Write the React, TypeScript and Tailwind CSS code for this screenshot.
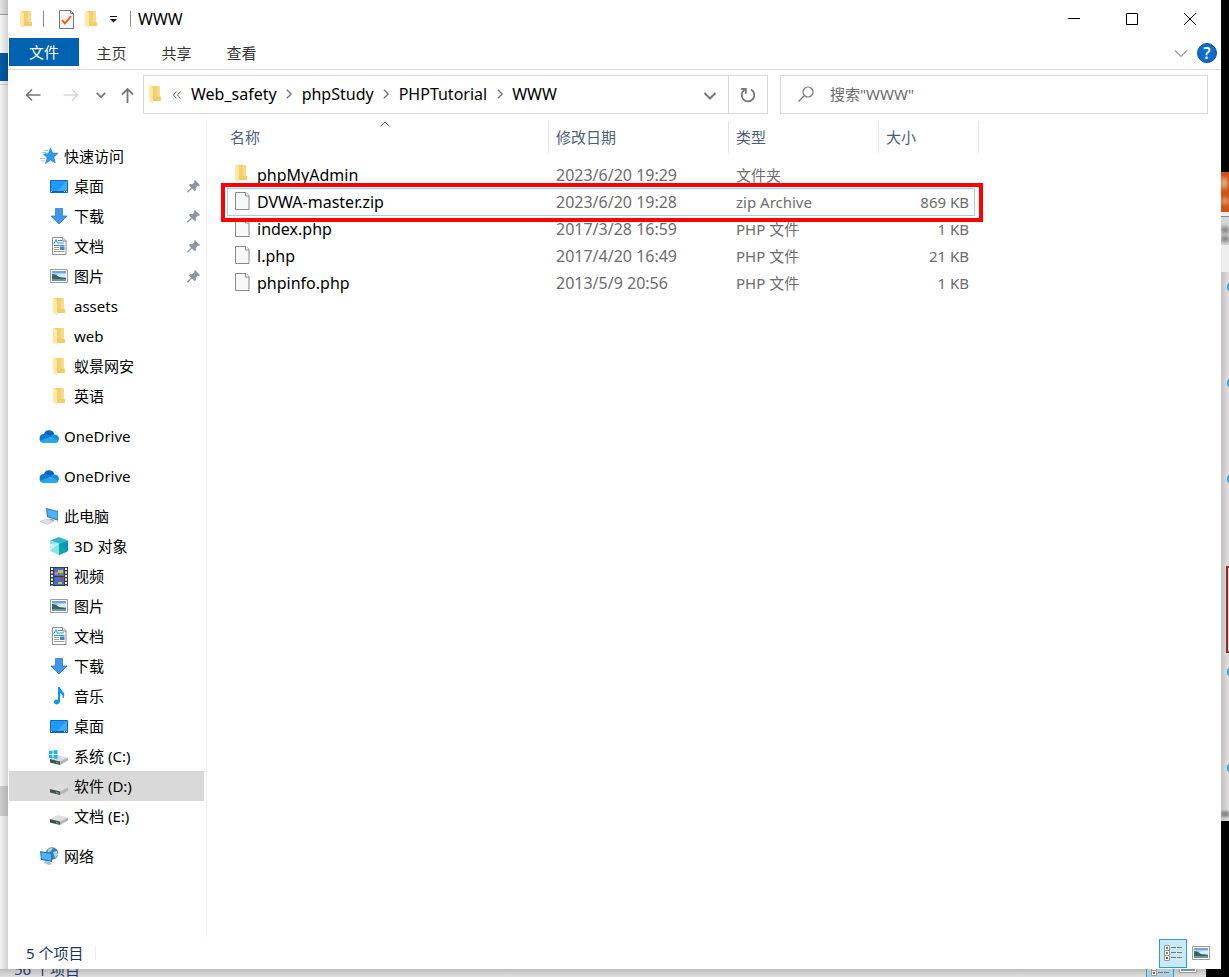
import type { ReactNode } from "react";

type IconName =
  | "star"
  | "desktop"
  | "download"
  | "document"
  | "picture"
  | "folder"
  | "cloud"
  | "computer"
  | "cube"
  | "video"
  | "music"
  | "systemDrive"
  | "drive"
  | "network";

interface NavItem {
  label: string;
  icon: IconName;
  root?: boolean;
  pinned?: boolean;
  active?: boolean;
}

interface FileRow {
  name: string;
  date: string;
  type: string;
  size: string;
  folder?: boolean;
  selected?: boolean;
}

const NAV_GROUPS: NavItem[][] = [
  [
    { label: "快速访问", icon: "star", root: true },
    { label: "桌面", icon: "desktop", pinned: true },
    { label: "下载", icon: "download", pinned: true },
    { label: "文档", icon: "document", pinned: true },
    { label: "图片", icon: "picture", pinned: true },
    { label: "assets", icon: "folder" },
    { label: "web", icon: "folder" },
    { label: "蚁景网安", icon: "folder" },
    { label: "英语", icon: "folder" },
  ],
  [{ label: "OneDrive", icon: "cloud", root: true }],
  [{ label: "OneDrive", icon: "cloud", root: true }],
  [
    { label: "此电脑", icon: "computer", root: true },
    { label: "3D 对象", icon: "cube" },
    { label: "视频", icon: "video" },
    { label: "图片", icon: "picture" },
    { label: "文档", icon: "document" },
    { label: "下载", icon: "download" },
    { label: "音乐", icon: "music" },
    { label: "桌面", icon: "desktop" },
    { label: "系统 (C:)", icon: "systemDrive" },
    { label: "软件 (D:)", icon: "drive", active: true },
    { label: "文档 (E:)", icon: "drive" },
  ],
  [{ label: "网络", icon: "network", root: true }],
];

const FILES: FileRow[] = [
  { name: "phpMyAdmin", date: "2023/6/20 19:29", type: "文件夹", size: "", folder: true },
  { name: "DVWA-master.zip", date: "2023/6/20 19:28", type: "zip Archive", size: "869 KB", selected: true },
  { name: "index.php", date: "2017/3/28 16:59", type: "PHP 文件", size: "1 KB" },
  { name: "l.php", date: "2017/4/20 16:49", type: "PHP 文件", size: "21 KB" },
  { name: "phpinfo.php", date: "2013/5/9 20:56", type: "PHP 文件", size: "1 KB" },
];

const CRUMBS = ["Web_safety", "phpStudy", "PHPTutorial", "WWW"];

function FolderIcon() {
  return (
    <svg width="12" height="17" viewBox="0 0 12 17" className="shrink-0">
      <path d="M1 0h10v11h1v4H3V2z" fill="#f5d06f" />
      <path d="M8 0h3v11H8z" fill="#f8dc8a" />
      <path d="M0 0l4 2v15l-4-2z" fill="#ffe9a6" />
      <path d="M4 11h8v4H4z" fill="#f3cb69" />
    </svg>
  );
}

function FileIcon() {
  return (
    <svg width="15" height="18" viewBox="0 0 15 18" className="shrink-0">
      <path d="M.5.5h10.500l3 3v14H.5z" fill="#f7f8f9" stroke="#8a8a8a" />
      <path d="M10.500.5v3.500h3.500" fill="#fff" stroke="#8a8a8a" />
    </svg>
  );
}

function PictureIcon() {
  return (
    <svg width="18" height="14" viewBox="0 0 18 14" className="shrink-0">
      <path d="M.5.5h17v13H.5z" fill="#fff" stroke="#9b9b9b" />
      <path d="M2 2h14v10H2z" fill="#a9cff2" />
      <path d="M2 2h14v2H2z" fill="#6ea4e6" />
      <path d="M7 6q4-2 9-1v3H7z" fill="#dcecf8" />
      <path d="M2 5q4 0 7 3l7 1v1H2z" fill="#3b6557" />
      <path d="M2 10h14v2H2z" fill="#6b93b2" />
    </svg>
  );
}

function PinIcon() {
  return (
    <svg width="13" height="13" viewBox="0 0 13 13" className="shrink-0">
      <path d="M8 0l5 5-1 1-1-.4L8.700 8l.3 2-1.200 1.200L5 8.500 1 12.500H0v-1L4.200 7.700 1.800 5.200 3 4l2.200.3L7.600 2 7 1z" fill="#8b969f" />
    </svg>
  );
}

function Chevron({ size, color, d, stroke }: { size: number; color: string; d: string; stroke: number }) {
  return (
    <svg width={size} height={size} viewBox="0 0 14 14" fill="none" stroke={color} strokeWidth={stroke}>
      <path d={d} />
    </svg>
  );
}

function DriveShape() {
  return (
    <>
      <path d="M0 12l8-4 10 2.500-8 4z" fill="#dedede" />
      <path d="M10 14.500l8-4v3L10 18z" fill="#b4b4b4" />
      <path d="M0 12l10 2.500V18L0 15.500z" fill="#4b4b4b" />
      <path d="M6 14.800l2.500.7v1.200L6 16z" fill="#39d353" />
    </>
  );
}

function NavIcon({ name }: { name: IconName }) {
  switch (name) {
    case "folder":
      return <FolderIcon />;
    case "picture":
      return <PictureIcon />;
    case "star":
      return (
        <svg width="18" height="16" viewBox="0 0 18 16">
          <path d="M10.500 0l2 5 5.500.3-4.300 3.600 1.500 6.100-4.700-3L5.500 15.500l1.700-5.700L3.500 6l5-.3z" fill="#2a9df0" stroke="#1878c4" strokeWidth=".7" />
          <path d="M4 2.500h4M1.500 4.500H6M0 10.500h5M1 13h3.500" stroke="#8ccaf3" />
        </svg>
      );
    case "desktop":
      return (
        <svg width="18" height="13" viewBox="0 0 18 13">
          <path d="M.5.5h17v12H.5z" fill="#1e9bfd" stroke="#0a6bb8" />
          <path d="M17 1v9L7 11z" fill="#41adff" />
          <path d="M1 11.500h16" stroke="#0b67ae" />
          <path d="M1 11.500h1M14 11.500h1M16 11.500h1" stroke="#fff" />
        </svg>
      );
    case "download":
      return (
        <svg width="18" height="17" viewBox="0 0 18 17">
          <path d="M5.500.5h7v7.500h4.500L9 16 1 8h4.500z" fill="#3b98ea" stroke="#2b7ccb" strokeWidth=".8" />
        </svg>
      );
    case "document":
      return (
        <svg width="18" height="18" viewBox="0 0 18 18">
          <path d="M2.500.5H13l3 3v14H2.500z" fill="#fff" stroke="#8d8d8d" />
          <path d="M12.500.5V4H16" fill="#eee" stroke="#8d8d8d" />
          <path d="M4 6.500L6 2.500l1.500 4M8 3.500h4M8 6h6M4 8.500h10.500" fill="none" stroke="#2693dc" />
          <path d="M4 10.500h5M4 12.500h5M4 14.500h10.500" stroke="#9a9a9a" />
          <path d="M10 9.500h4.500v3.500H10z" fill="#3f86b8" />
        </svg>
      );
    case "cloud":
      return (
        <svg width="20" height="13" viewBox="0 0 20 13" className="shrink-0">
          <path d="M5 3.500A5.500 5.500 0 0 1 15.300 4L12 7z" fill="#0364b8" />
          <path d="M4 12.500A4.300 4.300 0 0 1 4.500 4q3-1 5.500 1.200l3 2L6 12.500z" fill="#0f78d4" />
          <path d="M11 6q2-2.300 5-1.600 3.800.8 4 4.200 0 2-1.500 3.200z" fill="#1490df" />
          <path d="M1 11q1.200 2 3.500 2H16q2 0 3.300-1.600L12 6.500z" fill="#28a8ea" />
        </svg>
      );
    case "computer":
      return (
        <svg width="18" height="17" viewBox="0 0 18 17">
          <path d="M6 0l12.500 3v10L7 9z" fill="#2878b8" />
          <path d="M7.200 1.300L17.500 3.800v7.700L8 8.300z" fill="#4fb2f7" />
          <path d="M10 10.500l4 1.300v1.500l-5-1.500z" fill="#9aa4ad" />
          <path d="M0 13.500l7-2.500 6.500 2.500-6 3z" fill="#dfe3e7" stroke="#b0b7bd" strokeWidth=".5" />
        </svg>
      );
    case "cube":
      return (
        <svg width="18" height="18" viewBox="0 0 18 18">
          <path d="M9 0l9 3.500L9 6.500 0 3.500z" fill="#2fb9c5" />
          <path d="M0 3.500l9 3V18L0 14z" fill="#8be0e8" />
          <path d="M0 14V7l9-.5z" fill="#c4f3f5" />
          <path d="M18 3.500l-9 3V18l9-4z" fill="#0397c6" />
          <path d="M9 18V6.500L18 14z" fill="#08a9a9" />
        </svg>
      );
    case "video":
      return (
        <svg width="18" height="19" viewBox="0 0 18 19">
          <path d="M0 0h18v19H0z" fill="#3c3c3c" />
          <path d="M2 1v18M16 1v18" stroke="#f4f4f4" strokeWidth="2" strokeDasharray="2 1.500" />
          <path d="M4 1h10v8H4zM4 10h10v8H4z" fill="#3d70ce" />
          <path d="M8 3h5v3H8zM8 15h4v2H8z" fill="#e8bd32" />
          <path d="M5 5h3v3H5z" fill="#d86fc4" />
          <path d="M10 10h3v3h-2z" fill="#d5342a" />
          <path d="M9 6h4v2H9z" fill="#45a745" />
        </svg>
      );
    case "music":
      return (
        <svg width="18" height="18" viewBox="0 0 18 18">
          <path d="M8 0h2q.3 2.500 2.500 4.300Q15.500 7 13.500 11h-1q.8-3.500-2.500-4.800v8Q9.800 17 6.500 17.400 3.500 17 3.800 14.800 4.800 12 8 12.700z" fill="#0f97f0" />
        </svg>
      );
    case "systemDrive":
      return (
        <svg width="18" height="18" viewBox="0 1 18 18" className="overflow-visible">
          <g transform="translate(0 1)">
            <DriveShape />
          </g>
          <path d="M-1 5l3.500-.5V8H-1zM3.500 4.400l4-.5V8h-4zM-1 9h3.500v3.500L-1 12zM3.500 9h4v4.100l-4-.5z" fill="#14b5ee" />
        </svg>
      );
    case "drive":
      return (
        <svg width="18" height="18" viewBox="0 0 18 18">
          <DriveShape />
        </svg>
      );
    case "network":
      return (
        <svg width="18" height="18" viewBox="0 0 18 18" className="overflow-visible">
          <circle cx="12" cy="6.500" r="6.200" fill="#3f7fa8" />
          <path d="M7.500 3q2.500-2.500 5.500-2.300L11 4 8 6zM13 5l4-1 1 4-3 3z" fill="#a9d3e6" />
          <path d="M0 4l12 2v9L1 13z" fill="#1f78be" />
          <path d="M1 5.300l10 1.600v6.700L1.800 12z" fill="#4db2fa" />
          <path d="M5 14l5 1 2 2-3 1-5-2z" fill="#aebac3" />
        </svg>
      );
  }
}

function NavEntry({ item }: { item: NavItem }) {
  return (
    <li>
      <a
        href="#"
        className={`ml-px mr-[2px] flex h-[30px] items-center gap-1.5 pr-1 ${item.root ? "pl-[31px]" : "pl-[41px]"} ${
          item.active ? "bg-[#d9d9d9]" : ""
        }`}
      >
        <span className="flex w-[18px] shrink-0 items-center justify-center">
          <NavIcon name={item.icon} />
        </span>
        <span className="flex-1 whitespace-nowrap">{item.label}</span>
        {item.pinned && <PinIcon />}
      </a>
    </li>
  );
}

function TitleBar() {
  return (
    <header className="flex h-[38px] items-center pl-3 pr-[2px]">
      <FolderIcon />
      <span className="ml-[11px] h-4 w-px bg-[#8a8a8a]" />
      <button type="button" aria-label="属性" className="ml-[15px]">
        <svg width="15" height="19" viewBox="0 0 15 19">
          <path d="M.5.5h11l3 3v15H.5z" fill="#f6f7f8" stroke="#777" />
          <path d="M11.500.5v3h3" fill="none" stroke="#777" />
          <path d="M3 10l3 3.500L12 6" fill="none" stroke="#f0641e" strokeWidth="2" />
        </svg>
      </button>
      <button type="button" aria-label="新建文件夹" className="ml-[11px]">
        <FolderIcon />
      </button>
      <button type="button" aria-label="自定义快速访问工具栏" className="ml-[13px]">
        <svg width="7" height="7" viewBox="0 0 7 7">
          <path d="M0 0h7v1H0zM0 3h7L3.500 6.500z" fill="#111" />
        </svg>
      </button>
      <span className="ml-[13px] h-4 w-px bg-[#8a8a8a]" />
      <h1 className="ml-[7px] flex-1 text-base leading-5">WWW</h1>
      <WindowButton label="最小化">
        <path d="M0 5.500h12" />
      </WindowButton>
      <WindowButton label="最大化">
        <path d="M.5.5h11v11H.5z" />
      </WindowButton>
      <WindowButton label="关闭">
        <path d="M0 0l12 12M12 0L0 12" />
      </WindowButton>
    </header>
  );
}

function WindowButton({ label, children }: { label: string; children: ReactNode }) {
  return (
    <button type="button" aria-label={label} className="flex h-[38px] w-[58px] items-center justify-center">
      <svg width="12" height="12" viewBox="0 0 12 12" fill="none" stroke="#000">
        {children}
      </svg>
    </button>
  );
}

function RibbonTabs() {
  return (
    <div className="flex h-8 items-start border-b border-[#dadada] pl-px">
      <button type="button" className="h-7 w-[70px] bg-[#0063b1] text-white">
        文件
      </button>
      {["主页", "共享", "查看"].map((tab) => (
        <button key={tab} type="button" className="h-[30px] w-[65px] text-[#333]">
          {tab}
        </button>
      ))}
      <div className="ml-auto flex h-[30px] items-center gap-[9px] pr-1">
        <button type="button" aria-label="展开功能区">
          <Chevron size={14} color="#999" stroke={1.2} d="M1 4.500l6 6 6-6" />
        </button>
        <button
          type="button"
          aria-label="帮助"
          className="h-5 w-5 rounded-full border border-[#10508c] bg-[#0a6ccc] text-base font-semibold leading-[18px] text-white"
        >
          ?
        </button>
      </div>
    </div>
  );
}

function AddressRow() {
  return (
    <div className="flex items-center py-[5px] pl-1.5 pr-[13px]">
      <button type="button" aria-label="后退" className="flex h-[39px] w-[38px] items-center justify-center">
        <svg width="16" height="14" viewBox="0 0 16 14" fill="none" stroke="#767676" strokeWidth="1.600">
          <path d="M15.500 7H1.500M7 1.500L1.500 7 7 12.500" />
        </svg>
      </button>
      <button type="button" aria-label="前进" className="flex h-[39px] w-[38px] items-center justify-center">
        <svg width="16" height="14" viewBox="0 0 16 14" fill="none" stroke="#d8d8d8" strokeWidth="1.600">
          <path d="M.5 7h14M9 1.500L14.500 7 9 12.500" />
        </svg>
      </button>
      <button type="button" aria-label="最近浏览的位置" className="flex h-[39px] w-[22px] items-center justify-center">
        <Chevron size={12} color="#767676" stroke={2} d="M2 4.500l5 5 5-5" />
      </button>
      <button type="button" aria-label="上移" className="flex h-[39px] w-[31px] items-center justify-center">
        <svg width="13" height="16" viewBox="0 0 13 16" fill="none" stroke="#767676" strokeWidth="1.800">
          <path d="M6.500 16V2M1 7.500L6.500 2 12 7.500" />
        </svg>
      </button>

      <div className="flex h-[39px] min-w-0 flex-1 items-center border border-[#d9d9d9]">
        <span className="ml-[5px] mr-3">
          <FolderIcon />
        </span>
        <svg width="8" height="8" viewBox="0 0 8 8" fill="none" stroke="#666" className="mr-[10px] shrink-0">
          <path d="M3.500.5L.5 4l3 3.500M7.500.5l-3 3.500 3 3.500" />
        </svg>
        <nav aria-label="地址" className="flex flex-1 items-center pb-0.5 text-base leading-5">
          {CRUMBS.map((crumb, i) => (
            <span key={crumb} className="flex items-center">
              {i > 0 && (
                <span className="flex w-[25px] justify-center">
                  <Chevron size={10} color="#777" stroke={2} d="M4 1l6 6-6 6" />
                </span>
              )}
              <a href="#">{crumb}</a>
            </span>
          ))}
        </nav>
        <button type="button" aria-label="以前的位置" className="flex h-full w-[37px] items-center justify-center">
          <Chevron size={14} color="#767676" stroke={2} d="M1.500 5l5.500 5.500L12.500 5" />
        </button>
        <button
          type="button"
          aria-label="刷新"
          className="flex h-full w-[39px] items-center justify-center border-l border-[#d9d9d9]"
        >
          <svg width="16" height="16" viewBox="0 0 16 16" fill="none" stroke="#767676" strokeWidth="1.800">
            <path d="M4.500 2.800A6.300 6.300 0 1 0 11 2.500M1 1.900h4.800v4.800" />
          </svg>
        </button>
      </div>

      <label className="ml-3 flex h-[39px] w-[428px] items-center border border-[#d9d9d9] pb-0.5 pl-[17px]">
        <svg width="16" height="16" viewBox="0 0 16 16" fill="none" stroke="#767676" strokeWidth="1.200" className="shrink-0">
          <circle cx="10" cy="6" r="5" />
          <path d="M6.500 9.500L.5 15.500" />
        </svg>
        <input
          type="search"
          aria-label="搜索"
          placeholder={'搜索"WWW"'}
          className="ml-4 min-w-0 flex-1 bg-transparent leading-5 outline-none placeholder:text-[#6d6d6d]"
        />
      </label>
    </div>
  );
}

function FileTable() {
  return (
    <table className="w-[758px] table-fixed border-separate border-spacing-0 text-left">
      <colgroup>
        <col className="w-[328px]" />
        <col className="w-[180px]" />
        <col className="w-[150px]" />
        <col className="w-[100px]" />
      </colgroup>
      <thead className="text-[#4c607a]">
        <tr>
          {["名称", "修改日期", "类型", "大小"].map((title, i) => (
            <th key={title} scope="col" className="p-0 pb-[9px] font-normal">
              <div
                className={`relative flex h-8 items-center border-r border-[#e5e5e5] ${i === 0 ? "pl-[9px]" : "pl-[7px]"}`}
              >
                {title}
                {i === 0 && (
                  <span className="absolute left-1/2 top-0 -translate-x-1/2">
                    <svg width="11" height="6" viewBox="0 0 11 6" fill="none" stroke="#666" className="block">
                      <path d="M1 5.500L5.500 1 10 5.500" />
                    </svg>
                  </span>
                )}
              </div>
            </th>
          ))}
        </tr>
      </thead>
      <tbody>
        {FILES.map((file) => (
          <tr key={file.name} className="relative h-[27px] text-[#6d6d6d]">
            <td className="p-0 pb-0.5 pl-3.5 text-black">
              <a href="#" className="flex items-center text-base leading-5">
                <span className="flex w-[22px] pb-0.5">{file.folder ? <FolderIcon /> : <FileIcon />}</span>
                {file.name}
              </a>
              {file.selected && (
                <>
                  <span className="pointer-events-none absolute -top-px bottom-0 left-1.5 right-1 border border-[#99d1ff]" />
                  <span className="pointer-events-none absolute -inset-y-1.5 -right-1 left-0 z-10 border-4 border-[#ff0000]" />
                </>
              )}
            </td>
            <td className="p-0 pb-0.5 pl-[7px] text-base leading-5">{file.date}</td>
            <td className="p-0 pb-0.5 pl-[7px] leading-5">{file.type}</td>
            <td className="p-0 pb-0.5 pr-[10px] text-right leading-5">{file.size}</td>
          </tr>
        ))}
      </tbody>
    </table>
  );
}

function ListViewIcon() {
  return (
    <svg width="18" height="17" viewBox="0 0 18 17" className="shrink-0">
      <path d="M.5.5h5v5h-5zM.5 5.500h5v5h-5zM.5 10.500h5v5h-5z" fill="#fff" stroke="#999" />
      <path d="M2 2h2v2H2z" fill="#4679c0" />
      <path d="M2 7h2v2H2z" fill="#7d9a2c" />
      <path d="M2 12h2v2H2z" fill="#c33c22" />
      <path d="M7 2.500h5M13 2.500h5M7 7.500h5M13 7.500h5M7 12.500h5M13 12.500h5" stroke="#777" />
    </svg>
  );
}

function StatusBar() {
  return (
    <footer className="flex h-8 items-center pl-[18px] pr-[11px] text-[#1e395b]">
      <span>5 个项目</span>
      <span className="ml-3 h-[13px] w-px bg-[#ececec]" />
      <button
        type="button"
        aria-label="详细信息"
        className="ml-auto flex h-[29px] w-7 items-center justify-center border border-[#26a0da] bg-[#cbe8f6]"
      >
        <ListViewIcon />
      </button>
      <button type="button" aria-label="大图标" className="ml-[5px]">
        <PictureIcon />
      </button>
    </footer>
  );
}

// Sliver of the Explorer window underneath, left side
function BackdropLeft() {
  return (
    <div aria-hidden="true" className="relative flex w-2 shrink-0 flex-col">
      <div className="h-[15px] border-b border-[#a0a0a0] bg-[#e4e4e4]" />
      <div className="h-[38px] bg-[#f7f7f7]" />
      <div className="h-7 bg-[#005aa3]" />
      <div className="h-1 border-b border-[#cfcfcf] bg-[#f2f2f2]" />
      <div className="h-[701px] bg-[#f4f4f4]" />
      <div className="h-[30px] bg-[#cfcfcf]" />
      <div className="flex-1 bg-[#f4f4f4]" />
      <div className="absolute inset-0 bg-gradient-to-r from-transparent to-black/15" />
    </div>
  );
}

function BackdropRight() {
  return (
    <div aria-hidden="true" className="relative flex w-2 shrink-0 flex-col overflow-hidden bg-black">
      <div className="h-[172px]" />
      <div className="h-10 bg-[#cd5414]">
        <div className="mt-1.5 h-2.5 w-1.5 bg-[#e8b79c] blur-[2px]" />
        <div className="mt-2.5 h-1.5 w-2 bg-[#e39b73] blur-[2px]" />
      </div>
      <div className="h-1 bg-[#f3eeec]" />
      <div className="h-[29px] bg-[#d8d8d8]">
        <div className="h-px bg-[#888]" />
        <div className="mt-2.5 h-1.5 w-2 bg-[#777] blur-[2px]" />
        <div className="mt-1 h-1 w-2 bg-[#555] blur-[2px]" />
      </div>
      <div className="h-[27px] bg-[#eeeeee]" />
      <div className="h-[549px] bg-gradient-to-r from-[#c3c2c3] to-[#e2e0e1]" />
      <div className="absolute -right-1 top-[283px] h-2 w-1.5 rounded-full bg-[#35a5e5]" />
      <div className="absolute -right-1 top-[379px] h-2 w-1.5 rounded-full bg-[#35a5e5]" />
      <div className="absolute -right-1 top-[475px] h-2 w-1.5 rounded-full bg-[#35a5e5]" />
      <div className="absolute -right-1 top-[566px] h-[87px] w-[7px] border-2 border-[#8b3029] bg-[#d9d4d4]" />
      <div className="absolute -right-1 top-[668px] h-2 w-1.5 rounded-full bg-[#35a5e5]" />
      <div className="absolute -right-1 top-[764px] h-2 w-1.5 rounded-full bg-[#35a5e5]" />
      <div className="absolute right-0 top-[811px] h-1.5 w-2 bg-[#888] blur-[1px]" />
    </div>
  );
}

function BackdropBottom() {
  return (
    <div aria-hidden="true" className="flex h-2 shrink-0 bg-black">
      <div className="flex flex-1 items-end overflow-hidden bg-gradient-to-b from-[#bcbcbc] to-[#dfdfdf] pl-3.5 pr-[9px] text-[#1e395b]">
        <span className="leading-4">56 个项目</span>
        <span className="ml-auto flex h-7 w-7 items-end justify-center border-x border-[#26a0da] bg-[#b1cedb]">
          <ListViewIcon />
        </span>
        <span className="ml-[5px] pb-1">
          <PictureIcon />
        </span>
      </div>
      <div className="w-[23px]" />
    </div>
  );
}

export default function App() {
  return (
    <div className="flex min-h-screen flex-col overflow-hidden bg-black font-['Noto_Sans','Noto_Sans_CJK_SC',sans-serif] text-[15px] leading-5 text-black">
      <div className="flex flex-1">
        <BackdropLeft />
        <main className="flex min-w-0 flex-1 flex-col bg-white">
          <TitleBar />
          <RibbonTabs />
          <AddressRow />
          <div className="flex flex-1">
            <nav aria-label="导航窗格" className="w-[199px] shrink-0 border-r border-[#f0f0f0] pt-[22px]">
              <div className="flex flex-col gap-[10px]">
                {NAV_GROUPS.map((group, i) => (
                  <ul key={i}>
                    {group.map((item) => (
                      <NavEntry key={item.label} item={item} />
                    ))}
                  </ul>
                ))}
              </div>
            </nav>
            <section aria-label="文件列表" className="min-w-0 flex-1 pl-3.5 pt-[2px]">
              <FileTable />
            </section>
          </div>
          <StatusBar />
        </main>
        <BackdropRight />
      </div>
      <BackdropBottom />
    </div>
  );
}
